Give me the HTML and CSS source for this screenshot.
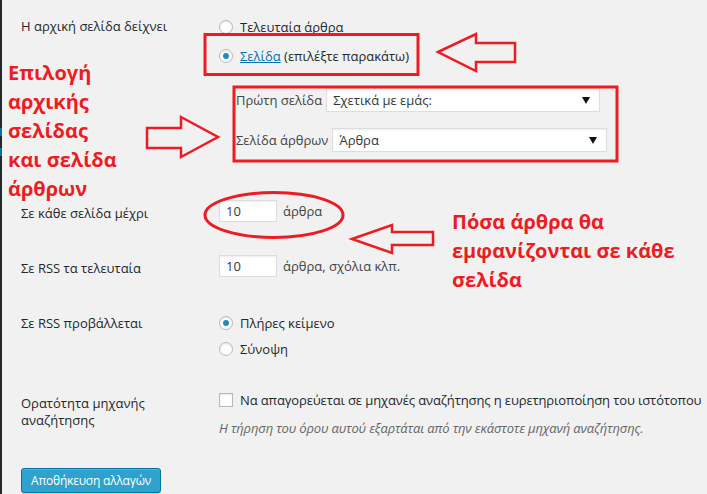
FILE: index.html
```html
<!DOCTYPE html>
<html lang="el">
<head>
<meta charset="utf-8">
<title>Ρυθμίσεις ανάγνωσης</title>
<link rel="stylesheet" href="styles.css">
</head>
<body>
<div class="page">
  <div class="adminbar"><span class="blip b1"></span><span class="blip b2"></span></div>
  <main class="content">
    <div class="row row-front">
      <div class="label">Η αρχική σελίδα δείχνει</div>
      <div class="field">
        <label class="radio"><span class="rb"></span>Τελευταία άρθρα</label>
        <label class="radio second"><span class="rb on"></span><a class="link" href="#">Σελίδα</a>&nbsp;(επιλέξτε παρακάτω)</label>
        <div class="subs">
          <div class="sub"><span class="sublabel">Πρώτη σελίδα</span><div class="select s1"><span>Σχετικά με εμάς:</span><i class="caret"></i></div></div>
          <div class="sub"><span class="sublabel">Σελίδα άρθρων</span><div class="select s2"><span>Άρθρα</span><i class="caret"></i></div></div>
        </div>
      </div>
    </div>

    <div class="row row-ppp">
      <div class="label lbl-input">Σε κάθε σελίδα μέχρι</div>
      <div class="field inline"><span class="input">10</span><span class="after">άρθρα</span></div>
    </div>

    <div class="row row-rss">
      <div class="label lbl-input">Σε RSS τα τελευταία</div>
      <div class="field inline"><span class="input">10</span><span class="after">άρθρα, σχόλια κλπ.</span></div>
    </div>

    <div class="row row-feed">
      <div class="label">Σε RSS προβάλλεται</div>
      <div class="field">
        <label class="radio"><span class="rb on"></span>Πλήρες κείμενο</label>
        <label class="radio tight"><span class="rb"></span>Σύνοψη</label>
      </div>
    </div>

    <div class="row row-vis">
      <div class="label lbl-two"><span class="ln">Ορατότητα μηχανής</span><span class="ln">αναζήτησης</span></div>
      <div class="field">
        <label class="check"><span class="cb"></span><span class="checktext">Να απαγορεύεται σε μηχανές αναζήτησης η ευρετηριοποίηση του ιστότοπου</span></label>
        <p class="desc">Η τήρηση του όρου αυτού εξαρτάται από την εκάστοτε μηχανή αναζήτησης.</p>
      </div>
    </div>

    <div class="submit"><button class="button" type="button">Αποθήκευση αλλαγών</button></div>
  </main>

  <svg class="marks" width="707" height="494" viewBox="0 0 707 494" aria-hidden="true">
    <g fill="none" stroke="#ed1c24" stroke-width="3">
      <rect x="205" y="34.5" width="213" height="40"/>
      <rect x="234" y="87" width="383" height="74"/>
      <ellipse cx="274" cy="215" rx="69" ry="22.5"/>
      <polygon points="438,52 476,34 476,43 515,43 515,62 476,62 476,71" stroke-width="2.5"/>
      <polygon points="147,128 181,128 181,117 218,137 181,157 181,148 147,148" stroke-width="2.5"/>
      <polygon points="352,239 392,225 392,232 433,232 433,245 392,245 392,253" stroke-width="2.5"/>
    </g>
  </svg>
  <div class="note note-left">Επιλογή<br>αρχικής<br>σελίδας<br>και σελίδα<br>άρθρων</div>
  <div class="note note-right">Πόσα άρθρα θα<br>εμφανίζονται σε κάθε<br>σελίδα</div>
</div>
</body>
</html>
```

FILE: styles.css
```css
* { box-sizing: border-box; }
html, body { margin: 0; padding: 0; }
body {
  background: #f1f1f1;
  font-family: "Open Sans", "Noto Sans", sans-serif;
  font-size: 13px;
  line-height: 20px;
  color: #23282d;
  width: 707px;
  height: 494px;
  overflow: hidden;
}
.page {
  position: relative;
  display: flex;
  width: 707px;
  height: 494px;
}
.adminbar {
  width: 2px;
  flex: none;
  background: #23282d;
  display: flex;
  flex-direction: column;
}
.blip { display: block; width: 2px; background: #0073aa; }
.b1 { margin-top: 128px; height: 8px; }
.b2 { margin-top: 12px; height: 8px; }

.content {
  flex: 1;
  padding: 16px 0 0 19px;
}
.row {
  display: grid;
  grid-template-columns: 198px 1fr;
  align-items: start;
}
.label { white-space: nowrap; }
.field { min-width: 0; white-space: nowrap; }

.radio, .check {
  display: flex;
  align-items: center;
  height: 20px;
}
.row-front .radio { margin-top: 1px; }
.row-front .radio.second { margin-top: 9px; }
.rb {
  width: 14px;
  height: 14px;
  flex: none;
  border: 1px solid #b4b9be;
  border-radius: 50%;
  background: #fff;
  box-shadow: inset 0 1px 2px rgba(0,0,0,.1);
  margin-right: 7px;
  display: flex;
  align-items: center;
  justify-content: center;
}
.rb.on::after {
  content: "";
  width: 6px;
  height: 6px;
  border-radius: 50%;
  background: #1e8cbe;
}
.link { color: #0073aa; text-decoration: underline; }

.subs { margin: 22px 0 0 17px; }
.sub { display: flex; align-items: center; height: 24px; }
.sub + .sub { margin-top: 16px; }
.sublabel { margin-right: 4px; color: #444; }
.select {
  height: 24px;
  background: #fff;
  border: 1px solid #ddd;
  box-shadow: inset 0 1px 2px rgba(0,0,0,.07);
  display: flex;
  align-items: center;
  justify-content: space-between;
  padding: 0 9px 0 6px;
  color: #32373c;
}
.s1 { width: 274px; }
.s2 { width: 275px; }
.caret {
  width: 0;
  height: 0;
  border-left: 4px solid transparent;
  border-right: 4px solid transparent;
  border-top: 7px solid #111;
}

.row-ppp { padding-top: 48px; }
.row-rss { padding-top: 32px; }
.lbl-input { margin-top: 3px; }
.inline { display: flex; align-items: center; }
.input {
  display: flex;
  align-items: center;
  width: 58px;
  height: 22px;
  background: #fff;
  border: 1px solid #ddd;
  box-shadow: inset 0 1px 2px rgba(0,0,0,.07);
  padding-left: 6px;
  color: #32373c;
}
.after { margin-left: 6px; color: #444; }

.row-feed { padding-top: 35px; }
.radio.tight { margin-top: 6px; }

.row-vis { padding-top: 31px; }
.lbl-two {
  display: flex;
  flex-direction: column;
  margin-top: 5px;
}
.lbl-two .ln { display: block; height: 17px; line-height: 17px; }
.cb {
  width: 14px;
  height: 14px;
  flex: none;
  border: 1px solid #b4b9be;
  background: #fff;
  box-shadow: inset 0 1px 2px rgba(0,0,0,.1);
  margin-right: 7px;
}
.checktext { letter-spacing: -0.12px; }
.desc {
  margin: 8px 0 0;
  font-style: italic;
  color: #666;
  letter-spacing: -0.15px;
}

.submit { padding-top: 30px; }
.button {
  height: 25px;
  padding: 0 9px;
  background: #2ea2cc;
  border: 1px solid #0074a2;
  border-radius: 3px;
  box-shadow: inset 0 1px 0 rgba(120,200,230,.5), 0 1px 0 rgba(0,0,0,.15);
  color: #fff;
  font-family: "Open Sans", "Noto Sans", sans-serif;
  font-size: 12px;
  letter-spacing: -0.2px;
  line-height: 23px;
}

.marks {
  position: absolute;
  left: 0;
  top: 0;
  pointer-events: none;
}
.note {
  position: absolute;
  color: #ed1c24;
  font-weight: bold;
  font-size: 20px;
  line-height: 29px;
  white-space: nowrap;
}
.note-left { left: 8px; top: 58px; }
.note-right { left: 452px; top: 207px; }
```
